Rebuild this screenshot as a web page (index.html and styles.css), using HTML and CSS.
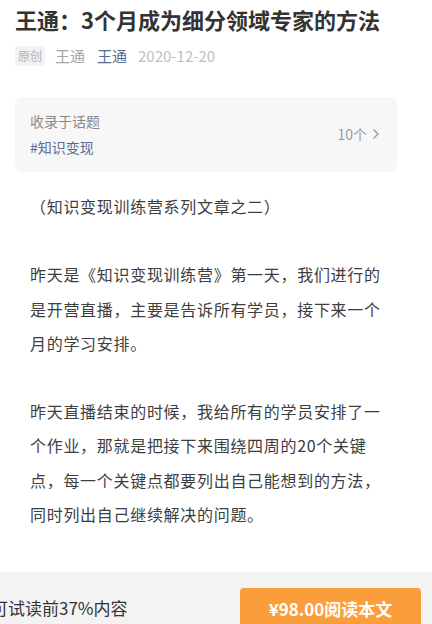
FILE: index.html
```html
<!DOCTYPE html>
<html lang="zh-CN">

<head>
  <meta charset="UTF-8">
  <meta name="viewport" content="width=device-width, initial-scale=1.0">
  <title>王通：3个月成为细分领域专家的方法</title>
  <link rel="stylesheet" href="styles.css">
</head>

<body>

  <div class="page">
    <h1 class="title">王通：3个月成为细分领域专家的方法</h1>

    <div class="meta">
      <span class="tag">原创</span>
      <span class="author">王通</span>
      <a class="account">王通</a>
      <span class="date">2020-12-20</span>
    </div>

    <!-- 话题卡片 -->
    <div class="topic">
      <div class="topic-info">
        <div class="topic-label">收录于话题</div>
        <div class="topic-name">#知识变现</div>
      </div>
      <div class="topic-count">10个
        <svg class="arrow" width="8" height="12" viewBox="0 0 8 12">
          <path d="M1.5 1.5 L6 6 L1.5 10.5" fill="none" stroke="#9a9a9a" stroke-width="1.4" />
        </svg>
      </div>
    </div>

    <div class="content">
      <p>（知识变现训练营系列文章之二）</p>
      <p><br></p>
      <p>昨天是《知识变现训练营》第一天，我们进行的是开营直播，主要是告诉所有学员，接下来一个月的学习安排。</p>
      <p><br></p>
      <p>昨天直播结束的时候，我给所有的学员安排了一个作业，那就是把接下来围绕四周的20个关键点，每一个关键点都要列出自己能想到的方法，同时列出自己继续解决的问题。</p>
      <p><br></p>
    </div>
  </div>

  <!-- 底部付费条 -->
  <div class="paybar">
    <span class="trial">可试读前37%内容</span>
    <button class="buy">¥98.00阅读本文</button>
  </div>

</body>

</html>
```

FILE: styles.css
```css
body {
  margin: 0;
  font-family: "Noto Sans CJK SC", "Noto Sans", sans-serif;
  background: #fff;
  color: #333;
  overflow: hidden;
}

.page {
  padding: 0 35px 0 15px;
}

.title {
  margin: 0;
  padding-top: 4px;
  font-size: 22px;
  line-height: 30px;
  font-weight: bold;
  color: #333;
}

.meta {
  display: flex;
  align-items: center;
  margin-top: 12px;
  font-size: 15px;
  line-height: 20px;
}

.tag {
  background: #f2f2f2;
  color: #b2b2b2;
  font-size: 12px;
  line-height: 20px;
  padding: 0 3px;
  margin-right: 10px;
}

.author {
  color: #a6a6a6;
  margin-right: 12px;
}

.account {
  color: #576b95;
  margin-right: 11px;
}

.date {
  color: #c0c0c0;
}

.topic {
  display: flex;
  align-items: center;
  justify-content: space-between;
  margin-top: 31px;
  padding: 11px 17px 12px 15px;
  background: #f7f7f7;
  border-radius: 8px;
}

.topic-label {
  font-size: 14px;
  line-height: 26px;
  color: #888;
}

.topic-name {
  font-size: 14px;
  line-height: 26px;
  color: #576b95;
}

.topic-count {
  font-size: 14px;
  color: #999;
  display: flex;
  align-items: center;
}

.arrow {
  margin-left: 5px;
}

.content {
  margin-top: 17px;
  padding: 0 15px;
}

.content p {
  margin: 0;
  font-size: 16px;
  line-height: 34.2px;
  letter-spacing: 0.7px;
  color: #3e3e3e;
}

.paybar {
  position: fixed;
  left: 0;
  right: 0;
  bottom: 0;
  height: 52px;
  background: #f3f3f3;
  display: flex;
  align-items: flex-start;
  justify-content: space-between;
  overflow: hidden;
}

.trial {
  margin-left: -9px;
  margin-top: 24px;
  font-size: 17px;
  line-height: 24px;
  color: #333;
}

.buy {
  margin: 16px 11px 0 0;
  width: 181px;
  height: 44px;
  border: 0;
  border-radius: 4px;
  background: #fa9d3b;
  color: #fff;
  font-family: "Noto Sans CJK SC", "Noto Sans", sans-serif;
  font-size: 17px;
  font-weight: bold;
  padding-bottom: 4px;
}
```
